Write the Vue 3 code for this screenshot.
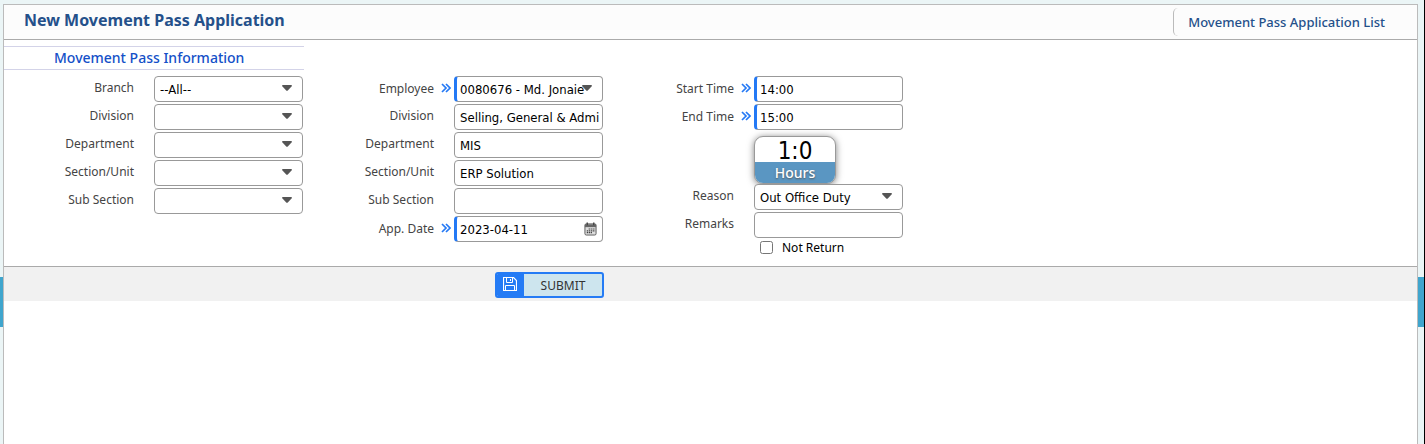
<script setup>
import { ref } from 'vue'

const orgFields = ref([
  { id: 'branch', label: 'Branch', value: '--All--' },
  { id: 'division', label: 'Division', value: '' },
  { id: 'department', label: 'Department', value: '' },
  { id: 'section', label: 'Section/Unit', value: '' },
  { id: 'subsection', label: 'Sub Section', value: '' },
])

const employeeFields = ref([
  { id: 'employee', label: 'Employee', value: '0080676 - Md. Jonaie', type: 'select', required: true },
  { id: 'emp-division', label: 'Division', value: 'Selling, General & Admi' },
  { id: 'emp-department', label: 'Department', value: 'MIS' },
  { id: 'emp-section', label: 'Section/Unit', value: 'ERP Solution' },
  { id: 'emp-subsection', label: 'Sub Section', value: '' },
  { id: 'app-date', label: 'App. Date', value: '2023-04-11', type: 'date', required: true },
])

const timeFields = ref([
  { id: 'start-time', label: 'Start Time', value: '14:00' },
  { id: 'end-time', label: 'End Time', value: '15:00' },
])

const reason = ref('Out Office Duty')
const remarks = ref('')
const notReturn = ref(false)
</script>

<template>
  <div class="page">
    <span class="tab tab-left"></span>
    <span class="tab tab-right"></span>
    <main class="panel">
      <header class="header">
        <h1>New Movement Pass Application</h1>
        <a href="#" class="list-link">Movement Pass Application List</a>
      </header>

      <form @submit.prevent>
        <div class="columns">
          <section class="column">
            <h2>Movement Pass Information</h2>
            <div v-for="f in orgFields" :key="f.id" class="row">
              <label :for="f.id">{{ f.label }}</label>
              <span class="mark"></span>
              <span class="control">
                <select :id="f.id" v-model="f.value">
                  <option :value="f.value">{{ f.value }}</option>
                </select>
                <svg class="arrow" viewBox="0 0 10 6"><path d="M0 1Q0 0 1 0H9Q10 0 10 1L5.8 5.4Q5 6 4.2 5.4Z" fill="#555" /></svg>
              </span>
            </div>
          </section>

          <section class="column offset">
            <div v-for="f in employeeFields" :key="f.id" class="row" :class="{ required: f.required }">
              <label :for="f.id">{{ f.label }}</label>
              <span class="mark">
                <svg v-if="f.required" viewBox="0 0 10 10"><path d="M1 1L5 5L1 9M5 1L9 5L5 9" fill="none" stroke="#2479f5" stroke-width="1.7" /></svg>
              </span>
              <span class="control">
                <select v-if="f.type === 'select'" :id="f.id" v-model="f.value">
                  <option :value="f.value">{{ f.value }}</option>
                </select>
                <input v-else :id="f.id" v-model="f.value" type="text" />
                <svg v-if="f.type === 'select'" class="arrow" viewBox="0 0 10 6"><path d="M0 1Q0 0 1 0H9Q10 0 10 1L5.8 5.4Q5 6 4.2 5.4Z" fill="#555" /></svg>
                <svg v-if="f.type === 'date'" class="calendar" viewBox="0 0 14 14">
                  <rect x="1" y="1.5" width="12" height="12" rx="1.5" fill="#ddd" stroke="#555" />
                  <path d="M1 2H13V5H1Z" fill="#666" />
                  <path d="M3.5 0V3M10.5 0V3" stroke="#444" stroke-width="1.5" />
                  <path d="M5 7H12M3 9H12M3 11H9" stroke="#444" stroke-width="1.3" stroke-dasharray="1.4 .7" />
                </svg>
              </span>
            </div>
          </section>

          <section class="column offset">
            <div v-for="f in timeFields" :key="f.id" class="row required">
              <label :for="f.id">{{ f.label }}</label>
              <span class="mark">
                <svg viewBox="0 0 10 10"><path d="M1 1L5 5L1 9M5 1L9 5L5 9" fill="none" stroke="#2479f5" stroke-width="1.7" /></svg>
              </span>
              <span class="control"><input :id="f.id" v-model="f.value" type="text" /></span>
            </div>
            <div class="duration">
              <output for="start-time end-time">1:0</output>
              <span>Hours</span>
            </div>
            <div class="row">
              <label for="reason">Reason</label>
              <span class="mark"></span>
              <span class="control">
                <select id="reason" v-model="reason"><option>Out Office Duty</option></select>
                <svg class="arrow" viewBox="0 0 10 6"><path d="M0 1Q0 0 1 0H9Q10 0 10 1L5.8 5.4Q5 6 4.2 5.4Z" fill="#555" /></svg>
              </span>
            </div>
            <div class="row">
              <label for="remarks">Remarks</label>
              <span class="mark"></span>
              <span class="control"><input id="remarks" v-model="remarks" type="text" /></span>
            </div>
            <div class="check">
              <input id="not-return" v-model="notReturn" type="checkbox" />
              <label for="not-return">Not Return</label>
            </div>
          </section>
        </div>

        <footer class="footer">
          <button type="submit" class="submit">
            <span class="save">
              <svg viewBox="0 0 14 14" fill="none" stroke="#fff" stroke-width="1">
                <path d="M.5 .5H10.5L13.5 3.5V13.5H.5Z" stroke-width="1.2" />
                <path d="M3.5 .5V5.5H9.5V.5M7.5 2V4M2.5 13.5V8.5H11.5V13.5" />
              </svg>
            </span>
            <span class="caption">SUBMIT</span>
          </button>
        </footer>
      </form>
    </main>
  </div>
</template>

<style>
body {
  margin: 0;
}
</style>

<style scoped>
* {
  box-sizing: border-box;
}
.page {
  position: relative;
  display: flex;
  min-height: 100vh;
  padding: 4px 6px 0 3px;
  border-right: 1px solid #000;
  background: #ebf5f6;
  font-family: "Noto Sans", "Open Sans", sans-serif;
  font-size: 12px;
}
.tab {
  position: absolute;
  top: 277px;
  height: 50px;
  background: #3fa5cd;
}
.tab-left {
  left: 0;
  width: 3px;
}
.tab-right {
  right: 0;
  width: 6px;
}
.panel {
  flex: 1;
  border: 1px solid #bbb;
  border-bottom: 0;
  background: #fff;
}
.header {
  display: flex;
  justify-content: space-between;
  height: 35px;
  padding: 3px 0 3px 20px;
  border-bottom: 1px solid #aaa;
  background: #fcfcfc;
}
h1 {
  margin: 0;
  font-size: 16px;
  font-weight: 700;
  line-height: 24px;
  color: #24508a;
}
.list-link {
  padding: 0 32px 0 14px;
  border-left: 1px solid #bbb;
  border-radius: 5px;
  font-size: 13px;
  font-weight: 500;
  line-height: 28px;
  color: #24508a;
  text-decoration: none;
}
.columns {
  display: flex;
  min-height: 227px;
  padding-top: 6px;
  border-bottom: 1px solid #aaa;
}
.column {
  display: flex;
  flex-direction: column;
  gap: 2px;
  width: 300px;
}
.offset {
  padding-top: 30px;
}
h2 {
  height: 24px;
  margin: 0 0 4px;
  padding-left: 50px;
  border: 1px solid #d3d3e8;
  border-width: 1px 0;
  font-size: 14px;
  font-weight: 500;
  line-height: 22px;
  color: #1450c8;
}
.row {
  display: grid;
  grid-template-columns: 130px 20px 149px;
  height: 26px;
}
.row label {
  line-height: 24px;
  text-align: right;
  color: #444;
}
.required label {
  line-height: 26px;
}
.mark {
  display: flex;
  align-items: center;
  padding: 0 0 2px 7px;
}
.mark svg {
  width: 10px;
  height: 10px;
}
.control {
  position: relative;
  display: flex;
}
.control input,
.control select {
  width: 100%;
  height: 26px;
  margin: 0;
  padding: 1px 2px 0 5px;
  border: 1px solid #999;
  border-radius: 4px;
  outline: 0;
  background: #fff;
  color: #000;
  font-family: "DejaVu Sans Condensed", "DejaVu Sans", sans-serif;
  font-size: 13px;
  appearance: none;
}
.required .control input,
.required .control select {
  padding-left: 3px;
  border-left: 3px solid #2479f5;
}
.arrow {
  position: absolute;
  top: 9px;
  right: 11px;
  width: 10px;
  height: 6px;
  pointer-events: none;
}
.calendar {
  position: absolute;
  top: 6px;
  right: 6px;
  width: 13px;
  height: 14px;
}
.duration {
  display: flex;
  flex-direction: column;
  width: 82px;
  height: 48px;
  margin: 4px 0 -2px 150px;
  overflow: hidden;
  border: 1px solid #999;
  border-radius: 9px;
  box-shadow: 0 1px 7px rgba(0, 0, 0, 0.5);
  background: #fff;
  text-align: center;
}
.duration output {
  height: 25px;
  font-family: "DejaVu Sans Condensed", "DejaVu Sans", sans-serif;
  font-size: 24px;
  line-height: 28px;
}
.duration span {
  height: 21px;
  background: #5a96c2;
  color: #fff;
  font-size: 14px;
  font-weight: 500;
  line-height: 21px;
  text-shadow: 0 1px 2px #555;
}
.check {
  display: flex;
  align-items: center;
  gap: 9px;
  height: 14px;
  padding-left: 156px;
}
.check input {
  width: 13px;
  height: 13px;
  margin: 0;
}
.footer {
  height: 34px;
  padding: 5px 0 0 491px;
  background: #f1f1f1;
}
.submit {
  display: flex;
  width: 109px;
  height: 26px;
  padding: 0;
  overflow: hidden;
  border: 2px solid #247bf5;
  border-radius: 3px;
  background: #cde5ee;
  color: #333;
  font-family: "Noto Sans", "Open Sans", sans-serif;
  font-size: 12px;
}
.save {
  display: flex;
  align-items: flex-start;
  justify-content: center;
  width: 27px;
  height: 22px;
  padding: 3px 2px 0 0;
  background: #247bf5;
}
.save svg {
  width: 14px;
  height: 14px;
}
.caption {
  flex: 1;
  line-height: 24px;
}
</style>
